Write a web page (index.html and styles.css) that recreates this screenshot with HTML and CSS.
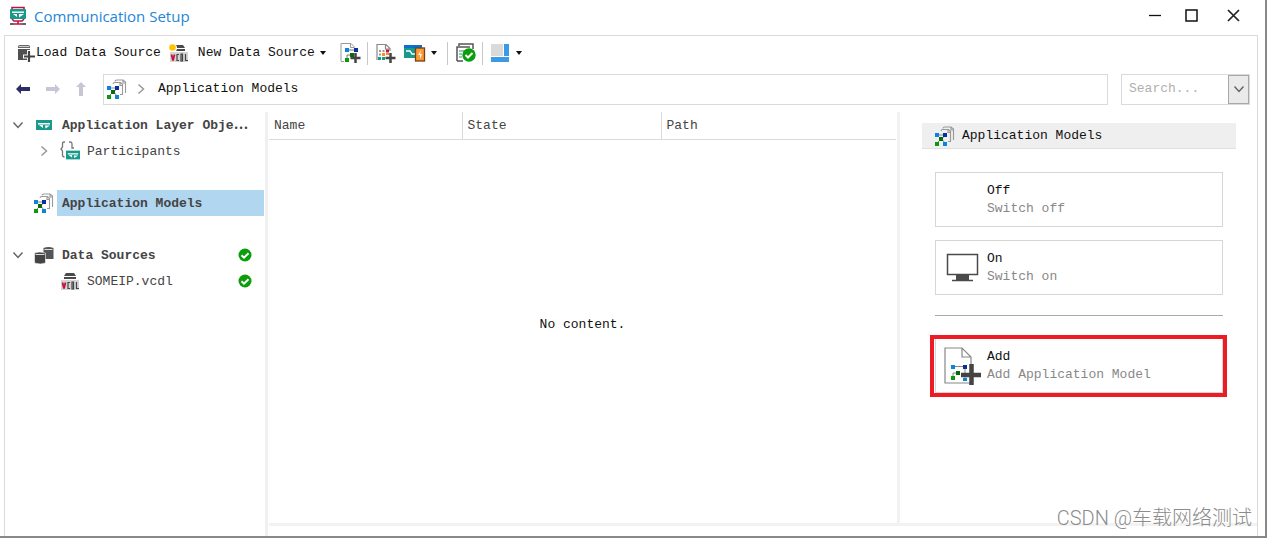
FILE: index.html
```html
<!DOCTYPE html>
<html lang="en">
<head>
<meta charset="utf-8">
<title>Communication Setup</title>
<link rel="stylesheet" href="styles.css">
</head>
<body>
<svg class="defs" aria-hidden="true">
  <symbol id="models" viewBox="0 0 20 20">
    <path d="M8 2.500Q8 1 10 1h6l2.500 2v11M6 5Q6 3.500 8 3.500h5.500l2 2v10H13M13 4v2.500h2.500M16 1.500v2.500h2.500" fill="none" stroke="#999" stroke-width="1.100"/>
    <path d="M4 9h4M6 13l-4 4M6 12l4 5M10 9l-3 4M2 9l4 4" fill="none" stroke="#888"/>
    <path fill="#0a84dc" d="M0 7h4v4H0zM8 16h4v4H8z"/><path fill="#0b2fa0" d="M8 7h4v4H8z"/><path fill="#0a6a0a" d="M4 11h4v4H4z"/><path fill="#0a9a0a" d="M0 16h4v4H0z"/>
  </symbol>
  <symbol id="vcdl" viewBox="0 0 18 17">
    <path d="M5 0h8l2 3H3z" fill="#4a4a4a"/><path d="M3 5h12" stroke="#4a4a4a" stroke-width="2"/>
    <path d="M0 7h18v10H0z" fill="#d4d4d4"/>
    <path d="M1.500 9.500l1.500 6 1.500-6" fill="none" stroke="#c8103c" stroke-width="1.800"/>
    <path d="M9 9.500H7v6h2M11 9v7h1.500V9zM15.500 9v6.500H18" fill="none" stroke="#444" stroke-width="1.200"/>
  </symbol>
  <symbol id="layer" viewBox="0 0 16 10">
    <path d="M0 0h16v10H0z" fill="#17998b"/><path d="M2 3h12v1.500H2zM3 5h4v3z" fill="#fff"/><path d="M9 5.500h5L9.500 8.500z" fill="#fff"/>
  </symbol>
  <symbol id="ok" viewBox="0 0 14 14"><circle cx="7" cy="7" r="6.500" fill="#0b9d0b"/><path d="M3.500 7.200l2.500 2.500 4.500-4.500" fill="none" stroke="#fff" stroke-width="2"/></symbol>
  <symbol id="down" viewBox="0 0 12 8"><path d="M1.500 1.500L6 6.500l4.500-5" fill="none" stroke="currentColor" stroke-width="1.500"/></symbol>
  <symbol id="right" viewBox="0 0 8 12"><path d="M1.500 1.500L6.500 6l-5 4.500" fill="none" stroke="currentColor" stroke-width="1.500"/></symbol>
  <symbol id="caret" viewBox="0 0 6 4"><path d="M0 0h6L3 4z" fill="#111"/></symbol>
  <symbol id="arrow" viewBox="0 0 14 10"><path d="M0 5l5-5v3h9v4H5v3z" fill="currentColor"/></symbol>
</svg>

<div class="window">
  <header class="titlebar">
    <svg width="18" height="20" viewBox="0 0 18 20"><path d="M3 4V1.500h12V4M3 13l2 2h8l2-2M9 15v3M5 18h8" fill="none" stroke="#c01440" stroke-width="1.600"/><path d="M1 18h4M13 18h4" stroke="#333" stroke-width="1.500"/><rect x="1" y="3" width="16" height="10" rx="1" fill="#17998b"/><path d="M3 5.500h12V7H3zM4 8h4v3zM10 8h5l-5 3.500z" fill="#fff"/></svg>
    <h1 class="title">Communication Setup</h1>
    <div class="controls">
      <button class="plain" aria-label="Minimize"><svg width="13" height="13"><path d="M1 6.500h12" stroke="#111" stroke-width="1.300"/></svg></button>
      <button class="plain" aria-label="Maximize"><svg width="13" height="13"><rect x="1" y="1" width="11" height="11" fill="none" stroke="#111" stroke-width="1.500"/></svg></button>
      <button class="plain" aria-label="Close"><svg width="13" height="13"><path d="M1 1l11 11M12 1L1 12" stroke="#222" stroke-width="1.700"/></svg></button>
    </div>
  </header>

  <main class="frame">
    <div class="toolbar">
      <button class="plain tool-load">
        <svg width="18" height="18" viewBox="0 0 18 18"><path d="M1 5h12v11H1z" fill="#505050"/><path d="M1 2.500Q1 1 3 1h8q2 0 2 1.500V4H1z" fill="#666"/><path d="M2 2.500h10" stroke="#ccc"/><path d="M12 6v12M6 12.500h12" stroke="#fff" stroke-width="4"/><path d="M12 7v11M7 12.500h11" stroke="#444" stroke-width="2.200"/></svg><span>Load Data Source</span>
      </button>
      <button class="plain tool-new">
        <svg width="20" height="18" viewBox="0 0 20 18"><use href="#vcdl" x="1" y="1" width="18" height="17"/><circle cx="4" cy="4" r="4" fill="#fff"/><circle cx="3.500" cy="3.500" r="3.300" fill="#ffc400"/></svg>
        <span>New Data Source</span>
        <svg width="6" height="4"><use href="#caret"/></svg>
      </button>
      <button class="plain tool-add" aria-label="Add application model"><svg width="21" height="21" viewBox="0 0 21 21"><path d="M1 18.500h3M1 18V.5h10l3 3V5M10.500.5v4H14" fill="none" stroke="#999"/><path d="M7 7h10M12 12H7v5" fill="none" stroke="#777"/><path d="M5 5h4v4H5z" fill="#0a84dc"/><path d="M14 5h4v4h-4z" fill="#0b2fa0"/><path d="M10 10h4v4h-4z" fill="#0a6a0a"/><path d="M5 15h4v4H5z" fill="#0a9a0a"/><path d="M15.500 10v10M10.500 15h10" stroke="#444" stroke-width="2.500"/></svg></button>
      <span class="sep"></span>
      <button class="plain tool-grid" aria-label="Add table"><svg width="20" height="20" viewBox="0 0 20 20"><path d="M1 17V1.500h9l4 4V8M9.500 1.500V6H14" fill="none" stroke="#888" stroke-width="1.200"/><path d="M3 7h2v2H3zM6.500 7h2v2h-2zM3 10.500h2v2H3z" fill="#999"/><path d="M10 6.500h3v3h-3z" fill="#c8103c"/><path d="M6 10h3v3H6z" fill="#ff8a20"/><path d="M2 14h3v3H2zM6 14h3v3H6z" fill="#17998b"/><path d="M10 11h3" stroke="#ff8a20" stroke-width="2"/><path d="M14.500 10v10M9.500 15h10" stroke="#444" stroke-width="2.500"/></svg></button>
      <button class="plain tool-win" aria-label="Windows"><svg width="22" height="18" viewBox="0 0 22 18"><path d="M0 1h18v3H0z" fill="#0a6fd0"/><path d="M0 4h11v10H0z" fill="#17998b"/><path d="M2 7h4l2 3h3" fill="none" stroke="#fff" stroke-width="1.300"/><rect x="11.500" y="4" width="9" height="13" fill="#ff9a30" stroke="#704020" stroke-width="1.300"/><path d="M17 6l-3 5h2v4l2-5h-2z" fill="#fff"/></svg><svg width="6" height="4"><use href="#caret"/></svg></button>
      <span class="sep"></span>
      <button class="plain tool-check" aria-label="Validate"><svg width="20" height="20" viewBox="0 0 20 20"><path d="M3 3V1h14v5M1 18V4h13M1 18h6" fill="none" stroke="#555" stroke-width="1.500"/><path d="M3 8h5M3 11h3M3 14h3" stroke="#72b8a0" stroke-width="1.500"/><circle cx="13" cy="12" r="6.700" fill="#0b9d0b"/><path d="M9.500 12l2.500 2.500 4.500-4.500" fill="none" stroke="#fff" stroke-width="2"/></svg></button>
      <span class="sep"></span>
      <button class="plain tool-view" aria-label="Layout"><svg width="18" height="18"><path d="M0 0h12v12H0z" fill="#dadada"/><path d="M13 0h5v12h-5zM0 13h18v5H0z" fill="#3c9ae4"/></svg><svg width="6" height="4"><use href="#caret"/></svg></button>
    </div>

    <nav class="navrow">
      <button class="plain back" aria-label="Back"><svg width="14" height="10"><use href="#arrow"/></svg></button>
      <button class="plain dim" aria-label="Forward"><svg class="flip" width="14" height="10"><use href="#arrow"/></svg></button>
      <button class="plain dim" aria-label="Up"><svg width="10" height="14" viewBox="0 0 10 14"><path d="M5 0l5 5H7v9H3V5H0z" fill="currentColor"/></svg></button>
      <div class="crumbs">
        <svg width="20" height="20"><use href="#models"/></svg>
        <svg class="grey" width="8" height="12"><use href="#right"/></svg>
        <span>Application Models</span>
      </div>
      <div class="search">
        <input type="text" placeholder="Search..." aria-label="Search">
        <button aria-label="Search options"><svg width="12" height="8"><use href="#down"/></svg></button>
      </div>
    </nav>

    <div class="columns">
      <ul class="tree">
        <li class="node"><svg class="twist" width="12" height="8"><use href="#down"/></svg><svg class="icon" width="16" height="10"><use href="#layer"/></svg><b class="label">Application Layer Obje⋯</b></li>
        <li class="node child"><svg class="twist grey" width="8" height="12"><use href="#right"/></svg><svg class="icon" width="20" height="20" viewBox="0 0 20 20"><path d="M5 1H4Q2.500 1 2.500 3v3L1 8l1.500 2v4q0 2 2 2M9 1h1.500Q12 1 12 3v4h2" fill="none" stroke="#777" stroke-width="1.300"/><use href="#layer" x="6" y="9" width="14" height="10"/></svg><span class="label">Participants</span></li>
        <li class="node gap"></li>
        <li class="node"><span class="twist"></span><svg class="icon" width="20" height="20"><use href="#models"/></svg><b class="label selected">Application Models</b></li>
        <li class="node gap"></li>
        <li class="node"><svg class="twist" width="12" height="8"><use href="#down"/></svg><svg class="icon" width="19" height="19" viewBox="0 0 19 19"><path d="M9 2q5-2 10 0v11H9z" fill="#555"/><path d="M10 3.500h8" stroke="#ddd"/><path d="M0 7q5-2 11 0v10q-5 2-11 0z" fill="#444" stroke="#fff" stroke-width=".6"/><path d="M1 8.500h9" stroke="#ddd"/></svg><b class="label">Data Sources</b><svg class="status" width="14" height="14"><use href="#ok"/></svg></li>
        <li class="node child"><span class="twist"></span><svg class="icon" width="18" height="17"><use href="#vcdl"/></svg><span class="label">SOMEIP.vcdl</span><svg class="status" width="14" height="14"><use href="#ok"/></svg></li>
      </ul>

      <div class="content">
        <section class="list">
          <table>
            <thead><tr><th class="col-name">Name</th><th class="col-state">State</th><th>Path</th></tr></thead>
          </table>
          <p class="empty">No content.</p>
        </section>
        <aside class="panel">
          <h2 class="panel-head"><svg width="20" height="20"><use href="#models"/></svg><span>Application Models</span></h2>
          <div class="actions">
            <button class="action"><span class="pic"></span><span class="words">Off<small>Switch off</small></span></button>
            <button class="action"><svg class="pic" width="36" height="30" viewBox="0 0 36 30"><rect x="1.500" y="1.500" width="30" height="20" fill="#fff" stroke="#4a4a4a" stroke-width="1.500"/><path d="M10 22h13v5H10z" fill="#4a4a4a"/><path d="M6 27.500h21" stroke="#4a4a4a" stroke-width="1.500"/></svg><span class="words">On<small>Switch on</small></span></button>
            <hr>
            <button class="action marked"><svg class="pic pic-add" width="38" height="38" viewBox="0 0 38 38"><path d="M1 1h17l9 9v26H1zM18 1v9h9" fill="#fff" stroke="#888" stroke-width="1.200"/><path d="M9 19.500h12M14 26H9v5M21 20v12" fill="none" stroke="#888"/><path d="M7 18h4v4H7zM19 31h4v3h-4z" fill="#0a84dc"/><path d="M19 18h4v4h-4z" fill="#0b2fa0"/><path d="M12 24h4v4h-4z" fill="#0a6a0a"/><path d="M7 29h4v4H7z" fill="#0a9a0a"/><path d="M27.500 17v21M17 28h20" stroke="#444" stroke-width="4.500"/></svg><span class="words">Add<small>Add Application Model</small></span></button>
          </div>
        </aside>
      </div>
    </div>
  </main>
  <div class="watermark">CSDN @车载网络测试</div>
</div>
</body>
</html>
```
FILE: styles.css
```css
* { box-sizing: border-box; }

body {
  margin: 0;
  font: 13px/18px "Liberation Mono", "Noto Sans CJK SC", monospace;
  color: #111;
  background: #fff;
}

.defs { position: absolute; width: 0; height: 0; }
svg { display: block; flex: none; }
h1, h2, p, ul { margin: 0; padding: 0; font: inherit; }

button { font: inherit; color: inherit; text-align: left; }

.plain {
  display: flex;
  align-items: center;
  padding: 0;
  border: 0;
  background: none;
}

.window {
  position: relative;
  display: flex;
  flex-direction: column;
  min-height: 100vh;
  border-right: 2px solid #888;
  border-bottom: 2px solid #888;
}

.titlebar {
  display: flex;
  align-items: center;
  height: 35px;
  padding: 0 25px 4px 9px;
}

.title {
  margin-left: 7px;
  font: 15px/22px "Open Sans", sans-serif;
  color: #1e86d8;
}

.controls { display: flex; gap: 24px; margin-left: auto; }
.controls button:last-child { margin-left: 5px; }

.frame {
  flex: 1;
  display: flex;
  flex-direction: column;
  margin: 0 7px 0 4px;
  border: 1px solid #dadada;
  border-bottom: 0;
}

.toolbar {
  display: flex;
  align-items: center;
  height: 34px;
  padding-left: 12px;
}

.tool-load { gap: 1px; }
.tool-new { gap: 5px; margin-left: 8px; }
.tool-new span { margin-left: 4px; }
.tool-add { margin-left: 14px; }
.tool-grid { margin-left: 8px; }
.tool-win { gap: 5px; margin-left: 8px; }
.tool-check { margin-left: 8px; }
.tool-view { gap: 7px; margin-left: 8px; }

.sep { width: 1px; height: 23px; margin-left: 6px; background: #c4c8cc; }
.tool-win + .sep { margin-left: 10px; }

.navrow {
  display: flex;
  align-items: center;
  gap: 16px;
  height: 38px;
  padding: 0 7px 0 11px;
}

.back { color: #2c2c68; }
.dim { color: #c6c6d6; }
.flip { transform: scaleX(-1); }
.grey { color: #999; }

.crumbs {
  flex: 1;
  display: flex;
  align-items: center;
  gap: 10px;
  height: 31px;
  margin-left: 1px;
  padding-left: 3px;
  border: 1px solid #dadada;
}
.crumbs span { margin-left: 3px; }

.search {
  display: flex;
  width: 129px;
  height: 31px;
  margin-left: -3px;
  border: 1px solid #dadada;
}
.search input {
  flex: 1;
  min-width: 0;
  padding: 0 7px;
  border: 0;
  font: inherit;
}
.search input::placeholder { color: #b0b0b0; opacity: 1; }
.search button {
  display: flex;
  align-items: center;
  justify-content: center;
  width: 21px;
  padding: 0;
  border: 1px solid #a8a8a8;
  background: #eaeaea;
  color: #666;
}

.columns { flex: 1; display: flex; padding-top: 4px; }

.tree {
  flex: none;
  width: 263px;
  padding-right: 1px;
  border-right: 3px solid #f0f0f0;
  list-style: none;
  color: #444;
}
.node { display: flex; align-items: center; height: 26px; padding-left: 7px; }
.child { padding-left: 33px; }
.twist { width: 12px; color: #666; }
.twist.grey { color: #999; }
.icon { width: 20px; margin: 0 3px 0 10px; }
.child .icon { margin-right: 2px; }
.label { flex: 1; padding: 2px 0 0 5px; line-height: 24px; white-space: nowrap; }
.selected { background: #b1d6f0; }
.status { margin-right: 12px; }

.content {
  flex: 1;
  display: flex;
  margin: 0 0 10px 1px;
  border-bottom: 3px solid #f2f2f2;
}

.list { flex: 1; display: flex; flex-direction: column; padding-right: 1px; }
.list table { width: 100%; border-collapse: collapse; table-layout: fixed; }
.list th {
  height: 27px;
  padding: 2px 5px 0;
  border-bottom: 1px solid #dadada;
  border-left: 1px solid #dadada;
  font-weight: normal;
  text-align: left;
  color: #444;
}
.list th:first-child { border-left: 0; }
.col-name { width: 193px; }
.col-state { width: 199px; }
.empty { margin: auto; padding-bottom: 12px; }

.panel {
  flex: none;
  width: 360px;
  padding: 11px 21px 0 22px;
  border-left: 3px solid #f2f2f2;
}
.panel-head {
  display: flex;
  align-items: center;
  gap: 7px;
  height: 26px;
  padding-left: 13px;
  border-bottom: 1px solid #e0e0e0;
  background: #efefef;
}

.actions { display: flex; flex-direction: column; gap: 13px; padding: 23px 13px; }
.action {
  position: relative;
  display: flex;
  align-items: center;
  height: 55px;
  padding: 0 8px 0 10px;
  border: 1px solid #d6d6d6;
  background: #fff;
}
.pic { width: 36px; margin-right: 5px; }
.pic-add { width: 38px; margin: 0 5px 0 -2px; }
.words small { display: block; font-size: 13px; color: #888; }

.actions hr { width: 100%; height: 1px; margin: 7px 0 9px; border: 0; background: #aaa; }

.marked::after {
  content: "";
  position: absolute;
  inset: -4px -5px -5px -6px;
  border: 4px solid #ed1c24;
}

.watermark {
  position: absolute;
  right: 13px;
  bottom: 4px;
  font: 300 20px/28px Roboto, "Noto Sans CJK SC", sans-serif;
  color: #8c8c8c;
}
```
